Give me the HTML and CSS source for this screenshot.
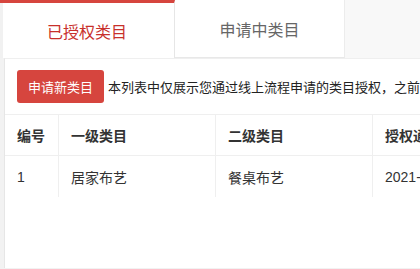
FILE: index.html
```html
<!DOCTYPE html>
<html lang="zh-CN">
<head>
<meta charset="utf-8">
<title>类目授权</title>
<link rel="stylesheet" href="styles.css">
</head>
<body>
<div class="tabs">
  <div class="tab tab-active">已授权类目</div>
  <div class="tab tab-idle">申请中类目</div>
</div>
<div class="panel">
  <div class="toolbar">
    <button class="btn-apply">申请新类目</button>
    <span class="notice">本列表中仅展示您通过线上流程申请的类目授权，之前通过线下方式申请的类目授权请联系您的业务对接人查询。</span>
  </div>
  <table class="grid">
    <thead>
      <tr>
        <th class="c-no">编号</th>
        <th class="c-cat">一级类目</th>
        <th class="c-cat">二级类目</th>
        <th class="c-date">授权通过时间</th>
        <th class="c-op">操作</th>
      </tr>
    </thead>
    <tbody>
      <tr>
        <td>1</td>
        <td>居家布艺</td>
        <td>餐桌布艺</td>
        <td>2021-08-12 10:23:45</td>
        <td>查看</td>
      </tr>
    </tbody>
  </table>
</div>
</body>
</html>
```
FILE: styles.css
```css
html, body {
  margin: 0;
  padding: 0;
  overflow: hidden;
  height: 100%;
}
body {
  background: #f2f2f2;
  font-family: "Liberation Sans", "Noto Sans CJK SC", sans-serif;
  color: #333;
  width: 420px;
}
.tabs {
  display: flex;
  height: 58px;
  background: #f8f8f8;
}
.tab {
  box-sizing: border-box;
  height: 58px;
  display: flex;
  align-items: center;
  justify-content: center;
  font-size: 16px;
  background: #fff;
}
.tab-active {
  width: 175px;
  border-top: 3px solid #d6453e;
  border-right: 1px solid #e6e6e6;
  color: #c8302b;
  box-shadow: inset 3px 0 0 #f1f1f1;
}
.tab-idle {
  width: 170px;
  border-bottom: 1px solid #e8e8e8;
  border-right: 1px solid #ececec;
  color: #666;
}
.panel {
  margin-left: 4px;
  border-left: 1px solid #e6e6e6;
  border-top: 1px solid #efefef;
  background: #fff;
  height: 210px;
  padding-top: 11px;
  box-sizing: border-box;
  width: 700px;
}
.toolbar {
  display: flex;
  align-items: center;
  gap: 4px;
  padding: 0 12px;
  height: 33px;
  white-space: nowrap;
}
.btn-apply {
  height: 33px;
  padding: 0 11px;
  border: none;
  border-radius: 3px;
  background: #d6453e;
  color: #fff;
  font-family: "Liberation Sans", "Noto Sans CJK SC", sans-serif;
  font-size: 13px;
  flex: none;
}
.notice {
  font-size: 13px;
  color: #222;
}
.grid {
  margin-top: 11px;
  border-collapse: collapse;
  border-top: 1px solid #efefef;
  font-size: 14px;
  table-layout: fixed;
}
.grid th,
.grid td {
  padding: 0 12px;
  text-align: left;
  border-right: 1px solid #efefef;
  white-space: nowrap;
  color: #333;
}
.grid th {
  height: 40px;
  font-weight: bold;
  border-bottom: 1px solid #efefef;
}
.grid td {
  height: 41px;
}
.c-no { width: 29px; }
.c-cat { width: 132px; }
.c-date { width: 160px; }
.c-op { width: 80px; }
```
